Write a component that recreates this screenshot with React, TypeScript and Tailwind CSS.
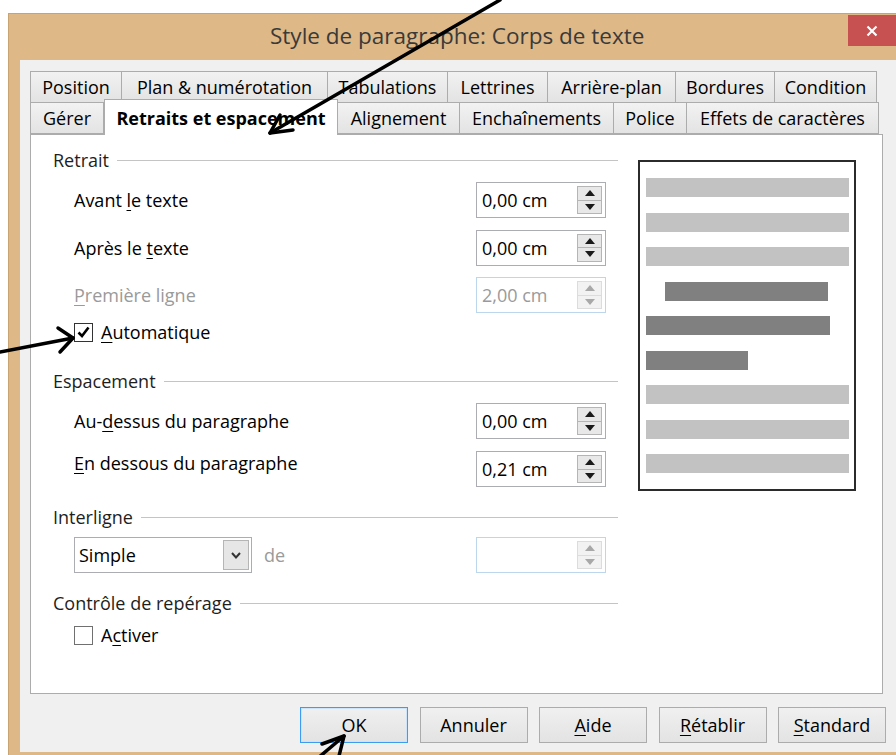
import type { ReactNode } from "react";

const rowOne = [
  { label: "Position", w: 92 },
  { label: "Plan & numérotation", w: 207 },
  { label: "Tabulations", w: 121 },
  { label: "Lettrines", w: 101 },
  { label: "Arrière-plan", w: 129 },
  { label: "Bordures", w: 100 },
  { label: "Condition", w: 103 },
];

const rowTwo = [
  { label: "Gérer", w: 74 },
  { label: "Retraits et espacement", w: 234, active: true },
  { label: "Alignement", w: 123 },
  { label: "Enchaînements", w: 155 },
  { label: "Police", w: 74 },
  { label: "Effets de caractères", w: 193 },
];

const previewBars = [
  { tone: "light", indent: 0, width: 203 },
  { tone: "light", indent: 0, width: 203 },
  { tone: "light", indent: 0, width: 203 },
  { tone: "dark", indent: 19, width: 163 },
  { tone: "dark", indent: 0, width: 184 },
  { tone: "dark", indent: 0, width: 102 },
  { tone: "light", indent: 0, width: 203 },
  { tone: "light", indent: 0, width: 203 },
  { tone: "light", indent: 0, width: 203 },
];

function Mn({ children }: { children: ReactNode }) {
  return <span className="underline decoration-1 underline-offset-[3px]">{children}</span>;
}

function Tab({ label, w, active }: { label: string; w: number; active?: boolean }) {
  if (active) {
    return (
      <div
        style={{ width: w }}
        className="relative z-10 -mt-[3px] -mb-px flex h-[36px] items-center justify-center border border-b-0 border-[#acacac] bg-white text-[18px] leading-[24px] font-bold text-black"
      >
        {label}
      </div>
    );
  }
  return (
    <div
      style={{ width: w }}
      className="flex h-full items-center justify-center border border-[#acacac] bg-gradient-to-b from-[#f2f2f2] to-[#e3e3e3] text-[18px] leading-[24px] text-black -ml-px first:ml-0"
    >
      {label}
    </div>
  );
}

function SpinArrows({ disabled }: { disabled?: boolean }) {
  const fill = disabled ? "#a8a8a8" : "#1a1a1a";
  return (
    <div
      className={`mr-[3px] flex h-[28px] w-[25px] flex-col border ${
        disabled ? "border-[#dcdcdc] bg-[#f2f2f2]" : "border-[#b5b5b5] bg-[#e8e8e8]"
      }`}
    >
      <div className="flex flex-1 items-center justify-center">
        <svg width="10" height="6" viewBox="0 0 10 6">
          <path d="M0 6 L5 0 L10 6 Z" fill={fill} />
        </svg>
      </div>
      <div className={`h-px ${disabled ? "bg-[#dcdcdc]" : "bg-[#b5b5b5]"}`} />
      <div className="flex flex-1 items-center justify-center">
        <svg width="10" height="6" viewBox="0 0 10 6">
          <path d="M0 0 L10 0 L5 6 Z" fill={fill} />
        </svg>
      </div>
    </div>
  );
}

function SpinField({ value, disabled }: { value: string; disabled?: boolean }) {
  return (
    <div
      className={`flex h-[36px] w-[130px] items-center border bg-white ${
        disabled ? "border-[#bcd6ee] text-[#9a9a9a]" : "border-[#abadb3] text-black"
      }`}
    >
      <span className="flex-1 pl-[5px] text-[18px] leading-[24px]">{value}</span>
      <SpinArrows disabled={disabled} />
    </div>
  );
}

function SectionHead({ title }: { title: string }) {
  return (
    <div className="flex h-[22px] items-center gap-[8px]">
      <span className="text-[18px] leading-[22px] text-[#1e1e1e]">{title}</span>
      <div className="h-px flex-1 bg-[#c4c4c4]" />
    </div>
  );
}

function FieldRow({ label, value, disabled, labelClass = "" }: { label: ReactNode; value: string; disabled?: boolean; labelClass?: string }) {
  return (
    <div className="flex items-center pl-[21px]">
      <span className={`w-[402px] text-[18px] leading-[24px] ${disabled ? "text-[#9a9a9a]" : "text-black"} ${labelClass}`}>{label}</span>
      <SpinField value={value} disabled={disabled} />
    </div>
  );
}

function CheckBox({ checked, children }: { checked?: boolean; children: ReactNode }) {
  return (
    <div className="flex h-[24px] items-center gap-[8px] pl-[21px]">
      <div className={`flex h-[19px] w-[19px] items-center justify-center border bg-white ${checked ? "border-[#333]" : "border-[#707070]"}`}>
        {checked && (
          <svg width="13" height="12" viewBox="0 0 13 12">
            <path d="M1.5 6.5 L5 10 L11.5 1.5" fill="none" stroke="#000" strokeWidth="2.6" />
          </svg>
        )}
      </div>
      <span className="text-[18px] leading-[24px] text-black">{children}</span>
    </div>
  );
}

function DialogButton({ children, focused }: { children: ReactNode; focused?: boolean }) {
  return (
    <button
      type="button"
      className={`flex h-[36px] w-[108px] items-center justify-center border bg-gradient-to-b from-[#f0f0f0] to-[#e3e3e3] text-[18px] leading-[24px] text-black ${
        focused ? "border-[#3c9cf0] shadow-[inset_0_0_0_1px_#cbe4fb]" : "border-[#acacac]"
      }`}
    >
      {children}
    </button>
  );
}

export default function App() {
  return (
    <div className="relative h-[755px] w-[896px] overflow-hidden bg-white font-['Open_Sans','Noto_Sans',sans-serif]">
      <div className="flex h-full flex-col pl-[8px] pt-[13px]">
        <div className="flex flex-1 flex-col border-l border-t border-[#c9a372] bg-[#deb887]">
          {/* title bar */}
          <div className="flex h-[46px]">
            <span className="ml-[261px] mt-[6px] text-[22.5px] leading-[32px] text-[#3a3a3a]">Style de paragraphe: Corps de texte</span>
            <div className="ml-auto mt-px flex h-[31px] w-[48px] items-center justify-center bg-[#c75050]">
              <svg width="12" height="12" viewBox="0 0 12 12">
                <path d="M1.5 1.5 L10.5 10.5 M10.5 1.5 L1.5 10.5" stroke="#fff" strokeWidth="2.2" />
              </svg>
            </div>
          </div>

          {/* dialog body */}
          <div className="mb-[3px] ml-[11px] flex flex-1 flex-col bg-[#f0f0f0] pl-[10px] pt-[11px]">
            <div className="flex w-[853px] flex-col">
              <div className="flex h-[32px]">
                {rowOne.map((t) => (
                  <Tab key={t.label} label={t.label} w={t.w} />
                ))}
              </div>
              <div className="-mt-px flex h-[32px] items-end">
                {rowTwo.map((t) => (
                  <Tab key={t.label} label={t.label} w={t.w} active={t.active} />
                ))}
              </div>

              {/* tab page */}
              <div className="flex h-[560px] gap-[20px] border border-[#acacac] bg-white pl-[22px] pt-[14px]">
                <div className="flex w-[565px] flex-col">
                  <SectionHead title="Retrait" />
                  <div className="mt-[11px] flex flex-col gap-[11.5px]">
                    <FieldRow label={<>Avant <Mn>l</Mn>e texte</>} value="0,00 cm" />
                    <FieldRow label={<>Après le <Mn>t</Mn>exte</>} value="0,00 cm" />
                    <FieldRow label={<><Mn>P</Mn>remière ligne</>} value="2,00 cm" disabled />
                  </div>
                  <div className="mt-[7px]">
                    <CheckBox checked>
                      <Mn>A</Mn>utomatique
                    </CheckBox>
                  </div>

                  <div className="mt-[26px]">
                    <SectionHead title="Espacement" />
                  </div>
                  <div className="mt-[11px] flex flex-col gap-[12px]">
                    <FieldRow label={<>Au-<Mn>d</Mn>essus du paragraphe</>} value="0,00 cm" />
                    <FieldRow label={<><Mn>E</Mn>n dessous du paragraphe</>} value="0,21 cm" labelClass="pb-[12px]" />
                  </div>

                  <div className="mt-[19px]">
                    <SectionHead title="Interligne" />
                  </div>
                  <div className="mt-[9px] flex items-center pl-[21px]">
                    <div className="flex h-[36px] w-[178px] items-center border border-[#abadb3] bg-white">
                      <span className="flex-1 pl-[4px] text-[18px] leading-[24px] text-black">Simple</span>
                      <div className="mr-[2px] flex h-[30px] w-[26px] items-center justify-center border border-[#b5b5b5] bg-[#e6e6e6]">
                        <svg width="10" height="7" viewBox="0 0 10 7">
                          <path d="M1 1 L5 5.5 L9 1" fill="none" stroke="#333" strokeWidth="2" />
                        </svg>
                      </div>
                    </div>
                    <span className="ml-[12px] w-[212px] text-[18px] leading-[24px] text-[#9a9a9a]">de</span>
                    <SpinField value="" disabled />
                  </div>

                  <div className="mt-[19px]">
                    <SectionHead title="Contrôle de repérage" />
                  </div>
                  <div className="mt-[9px]">
                    <CheckBox>
                      A<Mn>c</Mn>tiver
                    </CheckBox>
                  </div>
                </div>

                {/* paragraph preview */}
                <div className="mt-[11px] flex h-[331px] w-[218px] flex-col gap-[15.5px] border-2 border-[#2b2b2b] pl-[6px] pt-[16px]">
                  {previewBars.map((b, i) => (
                    <div
                      key={i}
                      style={{ width: b.width, marginLeft: b.indent }}
                      className={`h-[19px] ${b.tone === "dark" ? "bg-[#808080]" : "bg-[#c2c2c2]"}`}
                    />
                  ))}
                </div>
              </div>
            </div>

            {/* action buttons */}
            <div className="mt-[13px] flex gap-[11.5px] pl-[270px]">
              <DialogButton focused>OK</DialogButton>
              <DialogButton>Annuler</DialogButton>
              <DialogButton>
                <Mn>A</Mn>ide
              </DialogButton>
              <DialogButton>
                <Mn>R</Mn>établir
              </DialogButton>
              <DialogButton>
                <Mn>S</Mn>tandard
              </DialogButton>
            </div>
          </div>
        </div>
      </div>

      {/* hand-drawn pointer arrows */}
      <svg className="pointer-events-none absolute left-0 top-0 z-20" width="896" height="755" viewBox="0 0 896 755">
        <g fill="none" stroke="#000" strokeWidth="3.5" strokeLinecap="round" strokeLinejoin="round">
          <path d="M500 0 L270 133" />
          <path d="M280 115 L270 133 L293 130" />
          <path d="M0 352 L73 338" />
          <path d="M58 328 L73 338 L60 352" />
          <path d="M318 758 L344 736" />
          <path d="M322 744 L344 736 L339 756" />
        </g>
      </svg>
    </div>
  );
}
